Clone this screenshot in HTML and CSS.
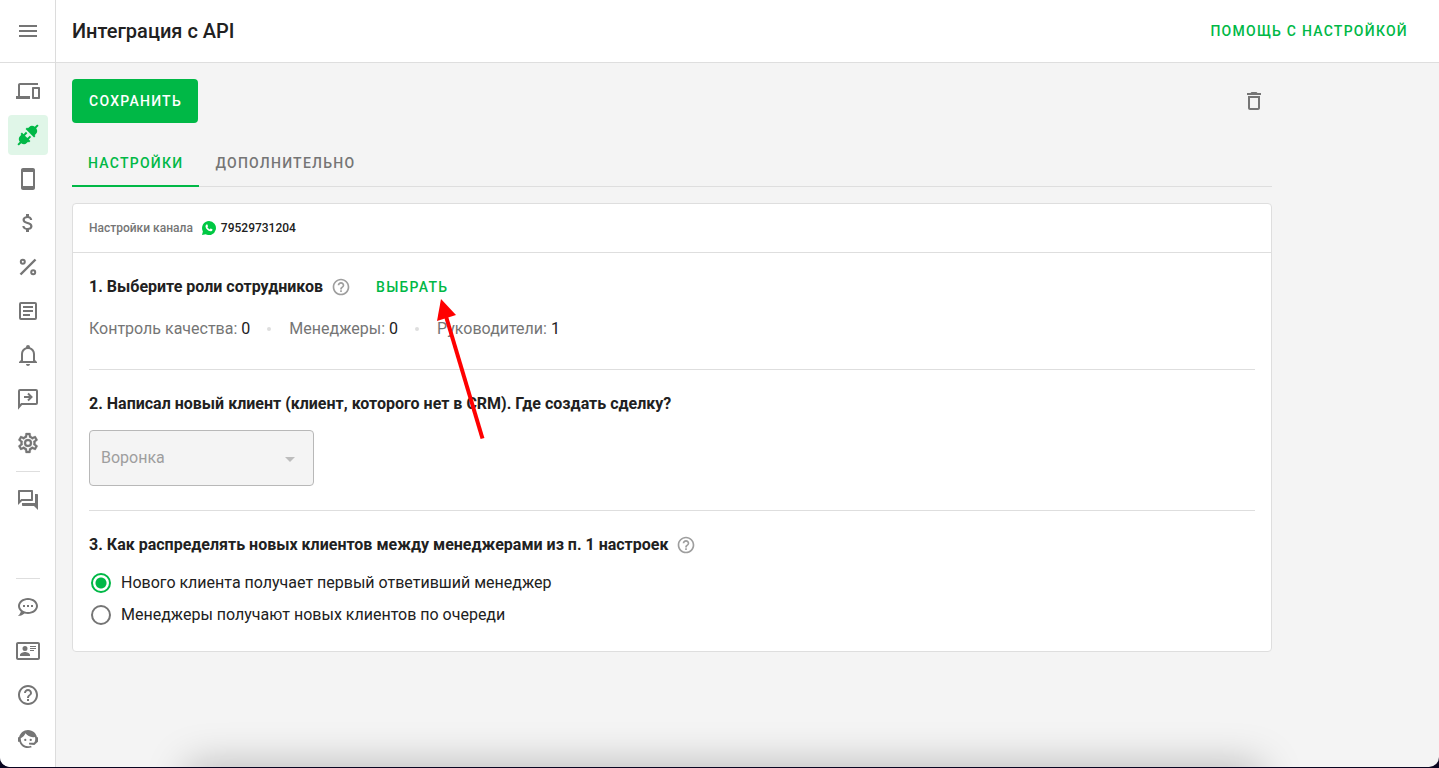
FILE: index.html
```html
<!DOCTYPE html>
<html lang="ru">
<head>
<meta charset="utf-8">
<meta name="viewport" content="width=device-width, initial-scale=1">
<title>Интеграция с API</title>
<link rel="stylesheet" href="styles.css">
</head>
<body>
<div class="app">
  <aside class="sidebar">
    <div class="sidebar-top">
      <button class="icon-button" type="button" aria-label="Меню">
        <svg class="icon" viewBox="0 0 24 24"><path d="M3 18h18v-2H3v2zm0-5h18v-2H3v2zm0-7v2h18V6H3z"/></svg>
      </button>
    </div>
    <nav class="nav" aria-label="Основная навигация">
      <div class="nav-group">
        <a class="nav-item" href="#channels" aria-label="Каналы"><svg class="icon" viewBox="0 0 24 24"><path d="M4 6h18V4H4c-1.1 0-2 .9-2 2v11H0v3h14v-3H4V6zm19 2h-6c-.55 0-1 .45-1 1v10c0 .55.45 1 1 1h6c.55 0 1-.45 1-1V9c0-.55-.45-1-1-1zm-1 10h-4v-8h4v8z"/></svg></a>
        <a class="nav-item nav-item-active" href="#integrations" aria-label="Интеграции" aria-current="page"><svg class="icon" viewBox="0 0 24 24"><g transform="translate(12 12) rotate(-45)"><path d="M2.600 -6h2v1.200h2c2.200 0 3.700 1.600 4 3.800H14v2h-3.400c-.3 2.200-1.800 3.800-4 3.800h-2V6h-2z"/><path d="M-2.600 -6h-2v1.200h-2c-2.200 0-3.700 1.600-4 3.800H-14v2h3.400c.3 2.200 1.800 3.800 4 3.800h2V6h2V3.700h3.400v-2h-3.400v-3.400h3.400v-2h-3.400z"/></g></svg></a>
        <a class="nav-item" href="#phone" aria-label="Телефон"><svg class="icon" viewBox="0 0 24 24"><path d="M17 1H7c-1.100 0-2 .9-2 2v18c0 1.100.9 2 2 2h10c1.100 0 2-.9 2-2V3c0-1.100-.9-2-2-2zm0 18H7V5h10v14z"/></svg></a>
        <a class="nav-item" href="#billing" aria-label="Оплата"><svg class="icon" viewBox="0 0 24 24"><path d="M11.800 10.900c-2.270-.59-3-1.200-3-2.150 0-1.090 1.010-1.850 2.700-1.850 1.780 0 2.440.85 2.500 2.100h2.210c-.07-1.720-1.120-3.300-3.210-3.810V3h-3v2.160c-1.940.42-3.500 1.680-3.500 3.610 0 2.310 1.910 3.460 4.700 4.130 2.500.6 3 1.480 3 2.410 0 .69-.49 1.790-2.700 1.790-2.060 0-2.870-.92-2.980-2.100h-2.200c.12 2.190 1.760 3.420 3.680 3.830V21h3v-2.150c1.950-.37 3.500-1.500 3.500-3.550 0-2.840-2.430-3.810-4.700-4.400z"/></svg></a>
        <a class="nav-item" href="#discounts" aria-label="Скидки"><svg class="icon icon-line" viewBox="0 0 24 24"><path d="M4.500 19.500l15-15" stroke-width="2.400"/><circle cx="6.800" cy="6.800" r="2"/><circle cx="17.200" cy="17.200" r="2"/></svg></a>
        <a class="nav-item" href="#articles" aria-label="Статьи"><svg class="icon icon-line" viewBox="0 0 24 24"><rect x="4" y="4" width="16" height="16" rx="1"/><path d="M7 8h10M7 12h10M7 16h7"/></svg></a>
        <a class="nav-item" href="#notifications" aria-label="Уведомления"><svg class="icon" viewBox="0 0 24 24"><path d="M10 21h4c0 1.100-.9 2-2 2s-2-.9-2-2m11-2v1H3v-1l2-2v-6c0-3.100 2.030-5.830 5-6.710V4a2 2 0 0 1 4 0v.29c2.970.88 5 3.610 5 6.710v6l2 2m-4-8a5 5 0 0 0-10 0v7h10v-7z"/></svg></a>
        <a class="nav-item" href="#replies" aria-label="Быстрые ответы"><svg class="icon icon-line" viewBox="0 0 24 24"><path d="M3 20V4c0-.6.4-1 1-1h16c.6 0 1 .4 1 1v12c0 .6-.4 1-1 1H5.500z"/><path d="M8 10h7M12 6.500l3.500 3.500-3.500 3.500"/></svg></a>
        <a class="nav-item" href="#settings" aria-label="Настройки"><svg class="icon" viewBox="0 0 24 24"><path stroke="currentColor" stroke-width=".3" d="M12 8a4 4 0 0 1 4 4 4 4 0 0 1-4 4 4 4 0 0 1-4-4 4 4 0 0 1 4-4m0 2a2 2 0 0 0-2 2 2 2 0 0 0 2 2 2 2 0 0 0 2-2 2 2 0 0 0-2-2m-2 12c-.25 0-.46-.18-.5-.42l-.37-2.650c-.63-.25-1.170-.59-1.690-.99l-2.490 1.010c-.22.08-.49 0-.61-.22l-2-3.460c-.13-.22-.07-.49.12-.64l2.110-1.660L4.500 12l.07-1-2.110-1.630c-.19-.15-.25-.42-.12-.64l2-3.460c.12-.22.39-.31.61-.22l2.490 1c.52-.39 1.060-.73 1.690-.98l.37-2.650c.04-.24.25-.42.5-.42h4c.25 0 .46.18.5.42l.37 2.650c.63.25 1.170.59 1.690.98l2.490-1c.22-.09.49 0 .61.22l2 3.460c.13.22.07.49-.12.64L19.430 11l.07 1-.07 1 2.110 1.630c.19.15.25.42.12.64l-2 3.460c-.12.22-.39.31-.61.22l-2.490-1c-.52.39-1.060.73-1.690.98l-.37 2.650c-.04.24-.25.42-.5.42h-4m1.250-18-.37 2.610c-1.200.25-2.260.89-3.030 1.780L5.440 7.350l-.75 1.300L6.800 10.200a5.550 5.550 0 0 0 0 3.600l-2.120 1.560.75 1.300 2.430-1.040c.77.88 1.820 1.520 3.010 1.760l.37 2.620h1.520l.37-2.610c1.190-.25 2.240-.89 3.010-1.770l2.430 1.040.75-1.300-2.120-1.550c.4-1.170.4-2.440 0-3.610l2.110-1.550-.75-1.300-2.410 1.040a5.420 5.420 0 0 0-3.030-1.770L12.750 4h-1.500z"/></svg></a>
        <hr class="nav-divider">
        <a class="nav-item" href="#chats" aria-label="Чаты"><svg class="icon" viewBox="0 0 24 24"><path d="M15 4v7H5.170L4 12.170V4h11m1-2H3c-.55 0-1 .45-1 1v14l4-4h10c.55 0 1-.45 1-1V3c0-.55-.45-1-1-1zm5 4h-2v9H6v2c0 .55.45 1 1 1h11l4 4V7c0-.55-.45-1-1-1z"/></svg></a>
      </div>
      <div class="nav-group">
        <hr class="nav-divider">
        <a class="nav-item" href="#feedback" aria-label="Обратная связь"><svg class="icon" viewBox="0 0 24 24"><path fill-rule="evenodd" d="M12 3c5.500 0 10 3.580 10 8s-4.500 8-10 8c-1.240 0-2.430-.18-3.530-.5C5.550 21 2 21 2 21c2.330-2.330 2.700-3.900 2.750-4.500C3.050 15.070 2 13.130 2 11c0-4.420 4.500-8 10-8zm0 2c-4.420 0-8 2.690-8 6s3.580 6 8 6 8-2.690 8-6-3.580-6-8-6z"/><path d="M7 10h2v2H7zM11 10h2v2h-2zM15 10h2v2h-2z"/></svg></a>
        <a class="nav-item" href="#contacts" aria-label="Контакты"><svg class="icon" viewBox="0 0 24 24"><path fill-rule="evenodd" d="M2 3h20c1.100 0 2 .9 2 2v14c0 1.100-.9 2-2 2H2c-1.100 0-2-.9-2-2V5c0-1.100.9-2 2-2zm0 2v14h20V5zM14 7h6v1h-6zM14 9h6v1h-6zM14 11h4v1h-4zM9 7a2.500 2.500 0 1 1 0 5 2.500 2.500 0 0 1 0-5zM4 17v-1c0-2 3.300-3 5-3s5 1 5 3v1z"/></svg></a>
        <a class="nav-item" href="#help" aria-label="Справка"><svg class="icon" viewBox="0 0 24 24"><path d="M11 18h2v-2h-2v2zm1-16C6.480 2 2 6.480 2 12s4.480 10 10 10 10-4.480 10-10S17.520 2 12 2zm0 18c-4.410 0-8-3.590-8-8s3.590-8 8-8 8 3.590 8 8-3.590 8-8 8zm0-14c-2.210 0-4 1.790-4 4h2c0-1.100.9-2 2-2s2 .9 2 2c0 2-3 1.750-3 5h2c0-2.250 3-2.500 3-5 0-2.210-1.790-4-4-4z"/></svg></a>
        <a class="nav-item" href="#support" aria-label="Поддержка"><svg class="icon" viewBox="0 0 24 24"><path d="M18.720 14.760C19.070 13.910 19.260 13 19.260 12C19.260 11.280 19.150 10.590 18.960 9.950C18.310 10.100 17.630 10.180 16.920 10.180C13.860 10.180 11.150 8.670 9.500 6.340C8.610 8.500 6.910 10.260 4.770 11.220C4.730 11.470 4.730 11.740 4.730 12A7.270 7.270 0 0 0 12 19.270C13.050 19.270 14.060 19.040 14.970 18.630C15.540 19.720 15.800 20.260 15.780 20.260C14.140 20.810 12.870 21.080 12 21.080C9.580 21.080 7.270 20.130 5.570 18.420C4.530 17.380 3.760 16.110 3.330 14.730H2V10.180H3.090C3.930 6.040 7.600 2.920 12 2.920C14.400 2.920 16.710 3.870 18.420 5.580C19.690 6.840 20.540 8.450 20.890 10.180H22V14.730H21.940L18.380 18L13.080 17.400V15.730H17.910z"/><circle cx="9.270" cy="12.910" r="1.140"/><circle cx="14.720" cy="12.910" r="1.140"/></svg></a>
      </div>
    </nav>
  </aside>

  <div class="page">
    <header class="header">
      <h1 class="title">Интеграция с API</h1>
      <a class="text-button" href="#setup-help">Помощь с настройкой</a>
    </header>

    <main class="content">
      <div class="toolbar">
        <button class="primary-button" type="button">Сохранить</button>
        <button class="icon-button" type="button" aria-label="Удалить">
          <svg class="icon" viewBox="0 0 24 24"><path d="M6 19c0 1.100.9 2 2 2h8c1.100 0 2-.9 2-2V7H6v12zM8 9h8v10H8V9zm7.500-5l-1-1h-5l-1 1H5v2h14V4z"/></svg>
        </button>
      </div>

      <div class="tabs" role="tablist">
        <button class="tab tab-active" type="button" role="tab" aria-selected="true">Настройки</button>
        <button class="tab" type="button" role="tab" aria-selected="false">Дополнительно</button>
      </div>

      <div class="card">
        <div class="card-header">
          <span class="channel-label">Настройки канала</span>
          <svg class="whatsapp" viewBox="0 0 14 14"><path fill="#00c843" d="M7 0a7 7 0 1 1-3.300 13.200L0 14l.9-3.600A7 7 0 0 1 7 0z"/><path fill="#fff" d="M4.700 3.400c.3-.1.600 0 .7.300l.6 1.300c.1.200 0 .4-.1.600l-.5.600c.5 1 1.300 1.700 2.400 2.200l.6-.7c.1-.2.300-.2.500-.1l1.300.6c.3.200.4.400.3.700-.3 1-1.100 1.500-2.100 1.400-2.500-.4-4.700-2.500-4.900-4.800 0-.9.400-1.800 1.200-2.100z"/></svg>
          <span class="channel-number">79529731204</span>
        </div>

        <div class="card-body">
          <section class="section">
            <div class="section-head">
              <h2 class="section-title">1. Выберите роли сотрудников</h2>
              <svg class="help" viewBox="0 0 24 24"><path d="M11 18h2v-2h-2v2zm1-16C6.480 2 2 6.480 2 12s4.480 10 10 10 10-4.480 10-10S17.520 2 12 2zm0 18c-4.410 0-8-3.590-8-8s3.590-8 8-8 8 3.590 8 8-3.590 8-8 8zm0-14c-2.210 0-4 1.790-4 4h2c0-1.100.9-2 2-2s2 .9 2 2c0 2-3 1.750-3 5h2c0-2.250 3-2.500 3-5 0-2.210-1.790-4-4-4z"/></svg>
              <button class="text-button choose-button" type="button">Выбрать</button>
            </div>
            <ul class="roles">
              <li class="role">Контроль качества: <span class="role-count">0</span></li>
              <li class="role">Менеджеры: <span class="role-count">0</span></li>
              <li class="role">Руководители: <span class="role-count">1</span></li>
            </ul>
          </section>

          <section class="section">
            <div class="section-head">
              <h2 class="section-title" id="funnel-title">2. Написал новый клиент (клиент, которого нет в CRM). Где создать сделку?</h2>
            </div>
            <div class="select">
              <select class="select-input" aria-labelledby="funnel-title" disabled>
                <option>Воронка</option>
              </select>
              <svg class="select-arrow" viewBox="0 0 24 24"><path d="M7 10l5 5 5-5z"/></svg>
            </div>
          </section>

          <section class="section section-last">
            <div class="section-head">
              <h2 class="section-title">3. Как распределять новых клиентов между менеджерами из п. 1 настроек</h2>
              <svg class="help" viewBox="0 0 24 24"><path d="M11 18h2v-2h-2v2zm1-16C6.480 2 2 6.480 2 12s4.480 10 10 10 10-4.480 10-10S17.520 2 12 2zm0 18c-4.410 0-8-3.590-8-8s3.590-8 8-8 8 3.590 8 8-3.590 8-8 8zm0-14c-2.210 0-4 1.790-4 4h2c0-1.100.9-2 2-2s2 .9 2 2c0 2-3 1.750-3 5h2c0-2.250 3-2.500 3-5 0-2.210-1.790-4-4-4z"/></svg>
            </div>
            <div class="options">
              <label class="option"><input class="radio" type="radio" name="distribution" checked>Нового клиента получает первый ответивший менеджер</label>
              <label class="option"><input class="radio" type="radio" name="distribution">Менеджеры получают новых клиентов по очереди</label>
            </div>
          </section>
        </div>
      </div>
    </main>
  </div>
  <div class="shade"></div>
  <svg class="pointer" viewBox="0 0 50 144" aria-hidden="true"><path d="M9 16L46.500 141.500" stroke="#f00" stroke-width="4"/><path d="M5 2L20 18 1 24z" fill="#f00"/></svg>
</div>
</body>
</html>
```
FILE: styles.css
```css
* {
  box-sizing: border-box;
}

body {
  margin: 0;
  padding-bottom: 1px;
  background: #0a0520;
  color: #212121;
  font-family: Roboto, "Noto Sans", sans-serif;
  font-size: 16px;
  line-height: 24px;
}

button,
select {
  font: inherit;
}

.app {
  position: relative;
  display: flex;
  min-height: calc(100vh - 1px);
  overflow: hidden;
  border-radius: 0 0 10px 10px;
  background: #f4f4f4;
}

.icon {
  display: block;
  width: 24px;
  height: 24px;
  fill: currentColor;
}

.icon-line {
  fill: none;
  stroke: currentColor;
  stroke-width: 2;
}

.icon-button {
  display: grid;
  place-items: center;
  width: 36px;
  height: 36px;
  padding: 0;
  border: 0;
  background: none;
  color: #757575;
}

/* Sidebar */
.sidebar {
  display: flex;
  flex-direction: column;
  flex: none;
  width: 56px;
  border-right: 1px solid #dcdcdc;
  background: #fff;
}

.sidebar-top {
  display: grid;
  place-items: center;
  height: 63px;
  border-bottom: 1px solid #dedede;
}

.nav {
  display: flex;
  flex: 1;
  flex-direction: column;
  justify-content: space-between;
  padding: 8px 0;
}

.nav-group {
  display: flex;
  flex-direction: column;
  align-items: center;
  gap: 4px;
}

.nav-item {
  display: grid;
  place-items: center;
  width: 40px;
  height: 40px;
  border-radius: 4px;
  color: #757575;
}

.nav-item-active {
  background: #e0f6e8;
  color: #00b846;
}

.nav-divider {
  width: 24px;
  height: 1px;
  margin: 4px 0;
  border: 0;
  background: #dedede;
}

/* Header */
.page {
  flex: 1;
  min-width: 0;
}

.header {
  display: flex;
  align-items: center;
  justify-content: space-between;
  height: 63px;
  padding: 0 31px 0 16px;
  border-bottom: 1px solid #dedede;
  background: #fff;
}

.title {
  margin: 0;
  font-size: 20px;
  font-weight: 500;
}

.text-button,
.primary-button,
.tab {
  border: 0;
  background: none;
  font-size: 14px;
  font-weight: 500;
  letter-spacing: 0.09em;
  line-height: 20px;
  text-decoration: none;
  text-transform: uppercase;
}

.text-button {
  padding: 0;
  color: #00b846;
}

/* Content */
.content {
  max-width: 1232px;
  padding: 16px;
}

.toolbar {
  display: flex;
  align-items: center;
  justify-content: space-between;
  margin-bottom: 16px;
}

.primary-button {
  height: 44px;
  padding: 0 16px 0 17px;
  border-radius: 4px;
  background: #00b846;
  color: #fff;
}

.tabs {
  display: flex;
  margin-bottom: 16px;
  box-shadow: inset 0 -1px #dedede;
}

.tab {
  height: 48px;
  padding: 0 16px;
  color: #757575;
}

.tab-active {
  box-shadow: inset 0 -2px #00b846;
  color: #00b846;
}

.card {
  border: 1px solid #dedede;
  border-radius: 4px;
  background: #fff;
}

.card-header {
  display: flex;
  align-items: center;
  height: 49px;
  padding: 0 16px;
  border-bottom: 1px solid #dedede;
  font-size: 12px;
  font-weight: 500;
}

.channel-label {
  color: #757575;
}

.whatsapp {
  width: 14px;
  height: 14px;
  margin: 0 5px 0 9px;
}

.card-body {
  padding: 0 16px;
}

.section {
  padding: 24px 0;
  border-bottom: 1px solid #dedede;
}

.section-last {
  padding-bottom: 20px;
  border-bottom: 0;
}

.section-head {
  display: flex;
  align-items: center;
  gap: 8px;
}

.section-title {
  margin: 0;
  font-size: 16px;
  font-weight: 700;
  line-height: 20px;
}

.help {
  flex: none;
  width: 20px;
  height: 20px;
  fill: #9e9e9e;
}

.choose-button {
  margin-left: 17px;
}

.roles {
  display: flex;
  flex-wrap: wrap;
  margin: 16px 0 0;
  padding: 0;
  color: #757575;
  line-height: 32px;
  list-style: none;
}

.role {
  display: flex;
  align-items: center;
  gap: 4px;
}

.role + .role::before {
  width: 4px;
  height: 4px;
  margin: 0 14px 0 17px;
  border-radius: 50%;
  background: #dedede;
  content: "";
}

.role-count {
  color: #212121;
}

.select {
  position: relative;
  width: 225px;
  margin-top: 16px;
}

.select-input {
  display: block;
  width: 100%;
  height: 56px;
  padding: 0 40px 0 11px;
  border: 1px solid #b8b8b8;
  border-radius: 4px;
  background: #f4f4f4;
  color: #9e9e9e;
  opacity: 1;
  appearance: none;
}

.select-arrow {
  position: absolute;
  top: 17px;
  right: 12px;
  width: 24px;
  height: 24px;
  fill: #bdbdbd;
  pointer-events: none;
}

.options {
  margin-top: 12px;
}

.option {
  display: flex;
  align-items: center;
  gap: 10px;
  height: 32px;
  padding-left: 2px;
}

.radio {
  width: 20px;
  height: 20px;
  margin: 0;
  border: 2px solid #757575;
  border-radius: 50%;
  background: #fff;
  appearance: none;
}

.radio:checked {
  border-color: #00b846;
  background: radial-gradient(circle, #00b846 5px, #fff 6px);
}

/* Overlays */
.shade {
  position: absolute;
  right: 190px;
  bottom: -30px;
  left: 200px;
  height: 20px;
  box-shadow: 0 0 40px 12px rgba(0, 0, 0, 0.25);
  pointer-events: none;
}

.pointer {
  position: absolute;
  top: 297px;
  left: 436px;
  width: 50px;
  height: 144px;
  pointer-events: none;
}
```
